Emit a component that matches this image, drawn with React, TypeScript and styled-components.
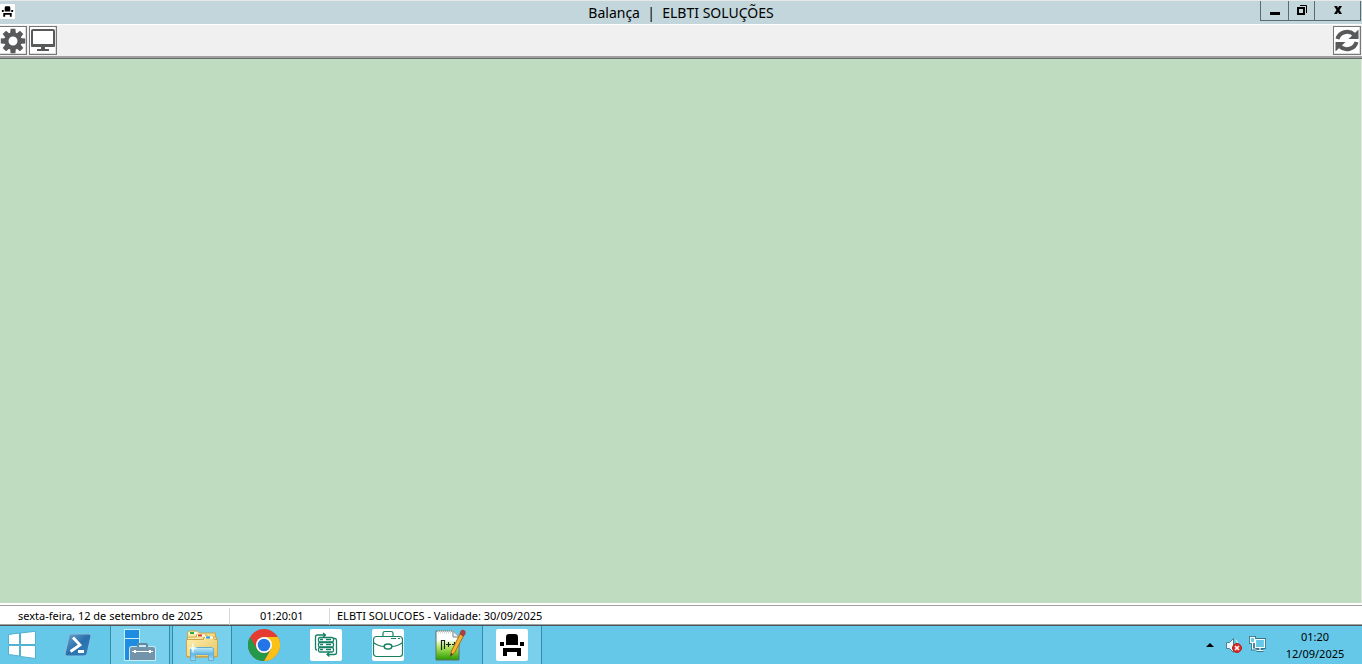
import React from 'react';
import styled, { createGlobalStyle, css } from 'styled-components';

const GlobalStyle = createGlobalStyle`
  * { box-sizing: border-box; }
  body { margin: 0; font-family: "Noto Sans", "Open Sans", sans-serif; color: #000; }
  button { font: inherit; color: inherit; margin: 0; padding: 0; }
  svg { display: block; flex: none; }
`;

const Desktop = styled.div`
  min-height: 100vh;
  display: flex;
  flex-direction: column;
  overflow: hidden;
`;

const TitleBar = styled.header`
  height: 25px;
  display: grid;
  grid-template-columns: 1fr auto 1fr;
  background: #c3d6dc;
  border-top: 1px solid #e6e8e8;
  border-bottom: 1px solid #fff;
`;

const AppIcon = styled.div`
  align-self: start;
  padding-top: 3px;
`;

const Title = styled.h1`
  margin: 0;
  font-size: 14px;
  font-weight: 400;
  line-height: 23px;
  white-space: pre;
`;

const WindowControls = styled.div`
  display: flex;
  justify-self: end;
  height: 20px;
  margin-right: 1px;
`;

const ControlButton = styled.button<{ $width: number }>`
  width: ${(p) => p.$width}px;
  display: flex;
  align-items: center;
  justify-content: center;
  padding-bottom: 1px;
  background: #c3d6dc;
  border: solid #5d6a70;
  border-width: 0 0 1px 1px;
  &:last-child { border-right-width: 1px; }
`;

const Toolbar = styled.nav`
  height: 34px;
  display: flex;
  gap: 2px;
  padding: 1px 1px 0 0;
  background: #f0f0f0;
  border-bottom: 1px solid #696969;
  box-shadow: inset 0 -2px #a0a0a0;
`;

const ToolButton = styled.button<{ $end?: boolean; $edge?: boolean }>`
  width: ${(p) => (p.$edge ? 27 : 28)}px;
  height: 29px;
  display: flex;
  align-items: center;
  justify-content: center;
  background: #fff;
  border: 1px solid #777;
  box-shadow: inset -1px -1px #ddd;
  ${(p) => p.$edge && css`border-left: 0;`}
  ${(p) => p.$end && css`margin-left: auto;`}
`;

const Workspace = styled.main`
  flex: 1;
  background: #c0dcc0;
  border-right: 1px solid #e3e8e3;
`;

const StatusBar = styled.footer`
  height: 23px;
  display: flex;
  padding-top: 3px;
  background: #fff;
  border-top: 2px solid #fff;
  border-bottom: 1px solid #4d5558;
  box-shadow: inset 0 1px #a0a0a0, inset 0 -1px #a0a0a0;
  font-size: 11px;
  line-height: 16px;
  white-space: pre;
`;

const StatusPanel = styled.div<{ $width?: number; $indent: number }>`
  padding-left: ${(p) => p.$indent}px;
  ${(p) => (p.$width ? css`width: ${p.$width}px; border-right: 1px solid #d7d7d7;` : css`flex: 1;`)}
`;

const Taskbar = styled.nav`
  height: 38px;
  display: flex;
  background: #65c8e8;
`;

const StartButton = styled.button`
  width: 48px;
  display: flex;
  align-items: center;
  padding-left: 8px;
  background: none;
  border: 0;
`;

const TaskButton = styled.button<{ $open?: boolean }>`
  width: 60px;
  margin-right: 2px;
  display: flex;
  align-items: center;
  justify-content: center;
  background: ${(p) => (p.$open ? '#78d0ec' : 'none')};
  border: solid ${(p) => (p.$open ? '#348ba8' : 'transparent')};
  border-width: 0 1px;
`;

const Tray = styled.div`
  margin-left: auto;
  display: flex;
  align-items: center;
`;

const TrayButton = styled.button`
  width: 24px;
  height: 38px;
  display: flex;
  align-items: center;
  justify-content: center;
  background: none;
  border: 0;
`;

const Clock = styled.button`
  width: 92px;
  height: 38px;
  padding-right: 2px;
  background: none;
  border: 0;
  font-size: 11px;
  line-height: 17px;
  text-align: center;
  time { display: block; }
`;

const Seat = ({ size }: { size: number }) => (
  <svg width={size} height={size} viewBox="0 0 32 32" aria-hidden="true">
    <rect width="32" height="32" rx="2" fill="#fff" />
    <path d="M10 16V8q0-3 3-3h6q3 0 3 3v8zM4 13h4v4H4zM24 13h4v4h-4zM7 19h18v8h-4v-4H11v4H7z" />
  </svg>
);

const gearTeeth = [0, 45, 90, 135, 180, 225, 270, 315];

const Gear = () => (
  <svg width="26" height="26" viewBox="0 0 26 26" fill="#58595b" aria-hidden="true">
    {gearTeeth.map((a) => (
      <path key={a} d="M10 7L10.600 .8h4.800L16 7z" transform={`rotate(${a} 13 13)`} />
    ))}
    <circle cx="13" cy="13" r="6.600" fill="none" stroke="#58595b" strokeWidth="4.200" />
  </svg>
);

const Monitor = () => (
  <svg width="26" height="27" viewBox="0 0 26 27" aria-hidden="true">
    <rect x="2" y="3" width="22" height="16" rx="1" fill="#fff" stroke="#58595b" strokeWidth="2" />
    <path d="M1 17h24v2q0 1-1 1H2q-1 0-1-1zM11 20h4v2h4v2H7v-2h4z" fill="#58595b" />
  </svg>
);

const Refresh = () => (
  <svg width="26" height="27" viewBox="0 0 26 27" aria-hidden="true">
    {[0, 180].map((a) => (
      <g key={a} transform={`rotate(${a} 13 13.500)`}>
        <path d="M3.500 12A9.800 9 0 0 1 20 7.500" fill="none" stroke="#58595b" strokeWidth="4" />
        <path d="M24.500 2.500v9.500H14.500z" fill="#58595b" />
      </g>
    ))}
  </svg>
);

const Windows = () => (
  <svg width="28" height="28" viewBox="0 0 28 28" fill="#fff" stroke="#50b1d1" strokeWidth="1" aria-hidden="true">
    <path d="M.5 3.500l11-1.500v11.500H.5zM12.500 2l15-1.700v13.200h-15zM.5 14.500h11v10.500l-11-1.500zM12.500 14.500h15v13l-15-2z" />
  </svg>
);

const PowerShell = () => (
  <svg width="28" height="24" viewBox="0 0 28 24" aria-hidden="true">
    <defs>
      <linearGradient id="ps" x1="0" y1="0" x2="1" y2="1">
        <stop offset="0" stopColor="#6ea6d0" /><stop offset=".5" stopColor="#2a70ad" /><stop offset="1" stopColor="#2f83c2" />
      </linearGradient>
    </defs>
    <path d="M7 1h18q2 0 2 2l-4 18q-1 2-3 2H3q-2 0-2-2L5 3q0-2 2-2z" fill="url(#ps)" stroke="#86c2df" />
    <path d="M9 4.500l7 7.500-9.500 6.500M14 18.500h6" fill="none" stroke="#fff" strokeWidth="2.800" />
  </svg>
);

const ServerManager = () => (
  <svg width="32" height="32" viewBox="0 0 32 32" aria-hidden="true">
    <path d="M0 0h16v32H0z" fill="#c5edf9" />
    <path d="M1 1h14v8H1zM1 10h14v21H1z" fill="#1c8de0" />
    <path d="M5 20q0-3 3-3h5q0-3 3-3h5q3 0 3 3h5q3 0 3 3v12H5z" fill="#c5edf9" />
    <path d="M6 20q0-2 2-2h21q2 0 2 2v11H6z" fill="#7293a9" />
    <path d="M14 18v-2q0-1 1-1h7q1 0 1 1v2" fill="none" stroke="#65869b" strokeWidth="2" />
    <path d="M8 22.500h21" stroke="#fff" />
    <path d="M10 21h2v3h-2zM25 21h2v3h-2z" fill="#fff" />
  </svg>
);

const Explorer = () => (
  <svg width="34" height="32" viewBox="0 0 34 32" aria-hidden="true">
    <defs>
      <linearGradient id="folder" x1="0" y1="0" x2="1" y2="1">
        <stop offset="0" stopColor="#fff0ad" /><stop offset="1" stopColor="#e5c363" />
      </linearGradient>
      <linearGradient id="stand" x1="0" y1="0" x2="0" y2="1">
        <stop offset="0" stopColor="#c2edfb" /><stop offset=".5" stopColor="#63b7e2" /><stop offset="1" stopColor="#a4dcf4" />
      </linearGradient>
    </defs>
    <g fill="url(#folder)" stroke="#c9a64e">
      <path d="M2.500 28V4q0-2 2-2h8l2 2h16v24z" />
      <path d="M2.500 28V8h9V6h10l2 2h8v20z" />
      <path d="M1.500 27.500V10.500h17v-2h9l2 2h3v17z" />
    </g>
    <path d="M4 4h8M12 6.500h8M20 8.500h8" stroke="#fff" strokeWidth="2" />
    <path d="M5 4h4" stroke="#28ae38" strokeWidth="2" />
    <path d="M13 6.500h4" stroke="#e13a27" strokeWidth="2" />
    <path d="M21 8.500h4" stroke="#269bd7" strokeWidth="2" />
    <path d="M5.500 31.500V20.500q0-2 2-2h19q2 0 2 2v11h-5v-6h-13v6z" fill="url(#stand)" stroke="#64acd0" />
    <path d="M8 13l1 5 4 1-4 1-1 5-1-5-4-1 4-1z" fill="#f2ffff" />
  </svg>
);

const Chrome = () => (
  <svg width="32" height="32" viewBox="0 0 32 32" aria-hidden="true">
    <circle cx="16" cy="16" r="16" fill="#e53b30" />
    <path d="M16 32A16 16 0 0 0 29.900 8H16l6.900 12z" fill="#fbc116" />
    <path d="M2.100 8l7 12A8 8 0 0 0 22.900 20L16 32A16 16 0 0 1 2.100 8" fill="#24994a" />
    <circle cx="16" cy="16" r="8" fill="#fff" />
    <circle cx="16" cy="16" r="6.300" fill="#2475e8" />
  </svg>
);

const ServerSync = () => (
  <svg width="32" height="32" viewBox="0 0 32 32" fill="none" stroke="#168064" strokeWidth="1.300" aria-hidden="true">
    <rect width="32" height="32" rx="2" fill="#fff" stroke="none" />
    <rect x="8.500" y="8.500" width="15" height="4.500" rx="1.500" />
    <rect x="8.500" y="13.500" width="15" height="4.500" rx="1.500" />
    <rect x="8.500" y="18.500" width="15" height="4.500" rx="1.500" />
    <path d="M10 10.500h3M10 15.500h3M10 20.500h3M16 10.500h5M16 15.500h5M16 20.500h5" />
    <path d="M7 21q-1.500 0-1.500-2V8q0-2 2-2H15M13 4L15.500 6 13 8.500M24 9.500h1q1.500 0 1.500 2v12q0 2-2 2H17M19.500 23L17 25.500l2.500 2" />
  </svg>
);

const Briefcase = () => (
  <svg width="32" height="32" viewBox="0 0 32 32" fill="none" stroke="#168064" strokeWidth="1.200" aria-hidden="true">
    <rect width="32" height="32" rx="2" fill="#fff" stroke="none" />
    <rect x="1.500" y="7.500" width="29" height="20" rx="3" />
    <path d="M11 7V4q0-1.500 2-1.500h6q2 0 2 1.500v3M1.500 13.500q5 4 11 4M19.500 17.500q6 0 11-4M19 9.500h5M26 9.500h2" />
    <ellipse cx="16" cy="17.500" rx="3.800" ry="2.500" strokeWidth="1.500" />
  </svg>
);

const Notepad = () => (
  <svg width="32" height="33" viewBox="0 0 32 33" aria-hidden="true">
    <defs>
      <linearGradient id="note" x1="0" y1="0" x2="0" y2="1">
        <stop offset=".3" stopColor="#fff" /><stop offset=".55" stopColor="#b3e760" /><stop offset="1" stopColor="#269a00" />
      </linearGradient>
    </defs>
    <path d="M2 2h17l6 6v23H2z" fill="url(#note)" stroke="#5f7168" />
    <path d="M4 3h15" stroke="#d4d8d5" strokeWidth="3" strokeDasharray="1 1" />
    <path d="M19 2v6h6" fill="#eee" stroke="#7c8880" />
    <path d="M7.500 21V11.500h3V20M12 15.500h5M14.500 13v5M18 15.500h5M20.500 13v5" fill="none" stroke="#17251c" strokeWidth="1.200" />
    <path d="M26 5l3.500 2-9 17-4 3 1-5z" fill="#f3b42e" stroke="#a86922" />
    <path d="M26.500 2l2-1.500 3 1.500v3l-2 2.500-4-2.500z" fill="#a94039" />
    <path d="M16 28l1-4 2 1z" fill="#483c27" />
  </svg>
);

const Speaker = () => (
  <svg width="18" height="18" viewBox="0 0 18 18" aria-hidden="true">
    <path d="M1.500 6.500h3l4-4v14l-4-4h-3z" fill="#e9f8fd" stroke="#507f90" />
    <path d="M10.500 4q2 1 2 3" fill="none" stroke="#e9f8fd" />
    <circle cx="12" cy="12" r="4.500" fill="#db2e28" stroke="#b51f1c" />
    <path d="M10 10l4 4M14 10l-4 4" stroke="#fff" strokeWidth="1.500" />
  </svg>
);

const networkCable = 'M3.500 7v6h3';
const networkScreen = 'M6.500 3.500h9v8h-9zM11 12v3M7.500 14.500h7';

const Network = () => (
  <svg width="18" height="18" viewBox="0 0 18 18" aria-hidden="true">
    <g fill="none" stroke="#38768b" strokeWidth="3">
      <path d={networkCable} /><path d={networkScreen} /><rect x="1.500" y="1.500" width="4" height="5" />
    </g>
    <g fill="#65c8e8" stroke="#f3fcff" strokeWidth="1.200">
      <path d={networkCable} fill="none" /><path d={networkScreen} /><rect x="1.500" y="1.500" width="4" height="5" />
    </g>
  </svg>
);

const tasks = [
  { name: 'Windows PowerShell', icon: <PowerShell /> },
  { name: 'Gerenciador do Servidor', icon: <ServerManager />, open: true },
  { name: 'Explorador de Arquivos', icon: <Explorer />, open: true },
  { name: 'Google Chrome', icon: <Chrome /> },
  { name: 'Sincronização', icon: <ServerSync /> },
  { name: 'Gestão', icon: <Briefcase /> },
  { name: 'Notepad++', icon: <Notepad /> },
  { name: 'Balança', icon: <Seat size={32} />, open: true },
];

export default function App() {
  return (
    <Desktop>
      <GlobalStyle />
      <TitleBar>
        <AppIcon><Seat size={15} /></AppIcon>
        <Title>Balança  |  ELBTI SOLUÇÕES</Title>
        <WindowControls>
          <ControlButton $width={28} aria-label="Minimizar">
            <svg width="12" height="12" viewBox="0 0 12 12"><path d="M1 8h10v3H1z" /></svg>
          </ControlButton>
          <ControlButton $width={26} aria-label="Restaurar">
            <svg width="12" height="12" viewBox="0 0 12 12" fill="none" stroke="#000"><path d="M4 1.500h6.500V9" /><path d="M2 4h6v6H2z" strokeWidth="2" /></svg>
          </ControlButton>
          <ControlButton $width={47} aria-label="Fechar">
            <svg width="10" height="10" viewBox="0 0 10 10"><path d="M1 1h3l1 2 1-2h3L6.500 5 9 9H6L5 7 4 9H1l2.500-4z" /></svg>
          </ControlButton>
        </WindowControls>
      </TitleBar>
      <Toolbar aria-label="Ferramentas">
        <ToolButton $edge aria-label="Configurações"><Gear /></ToolButton>
        <ToolButton aria-label="Monitor"><Monitor /></ToolButton>
        <ToolButton $end aria-label="Atualizar"><Refresh /></ToolButton>
      </Toolbar>
      <Workspace />
      <StatusBar>
        <StatusPanel $width={230} $indent={18}>sexta-feira, 12 de setembro de 2025</StatusPanel>
        <StatusPanel $width={100} $indent={30}>01:20:01</StatusPanel>
        <StatusPanel $indent={7}>ELBTI SOLUCOES - Validade: 30/09/2025</StatusPanel>
      </StatusBar>
      <Taskbar aria-label="Barra de tarefas">
        <StartButton aria-label="Iniciar"><Windows /></StartButton>
        {tasks.map((t) => (
          <TaskButton key={t.name} $open={t.open} aria-label={t.name}>{t.icon}</TaskButton>
        ))}
        <Tray>
          <TrayButton aria-label="Mostrar ícones ocultos">
            <svg width="8" height="4" viewBox="0 0 8 4"><path d="M0 4l4-4 4 4z" /></svg>
          </TrayButton>
          <TrayButton aria-label="Volume"><Speaker /></TrayButton>
          <TrayButton aria-label="Rede"><Network /></TrayButton>
          <Clock>
            <time dateTime="01:20">01:20</time>
            <time dateTime="2025-09-12">12/09/2025</time>
          </Clock>
        </Tray>
      </Taskbar>
    </Desktop>
  );
}
